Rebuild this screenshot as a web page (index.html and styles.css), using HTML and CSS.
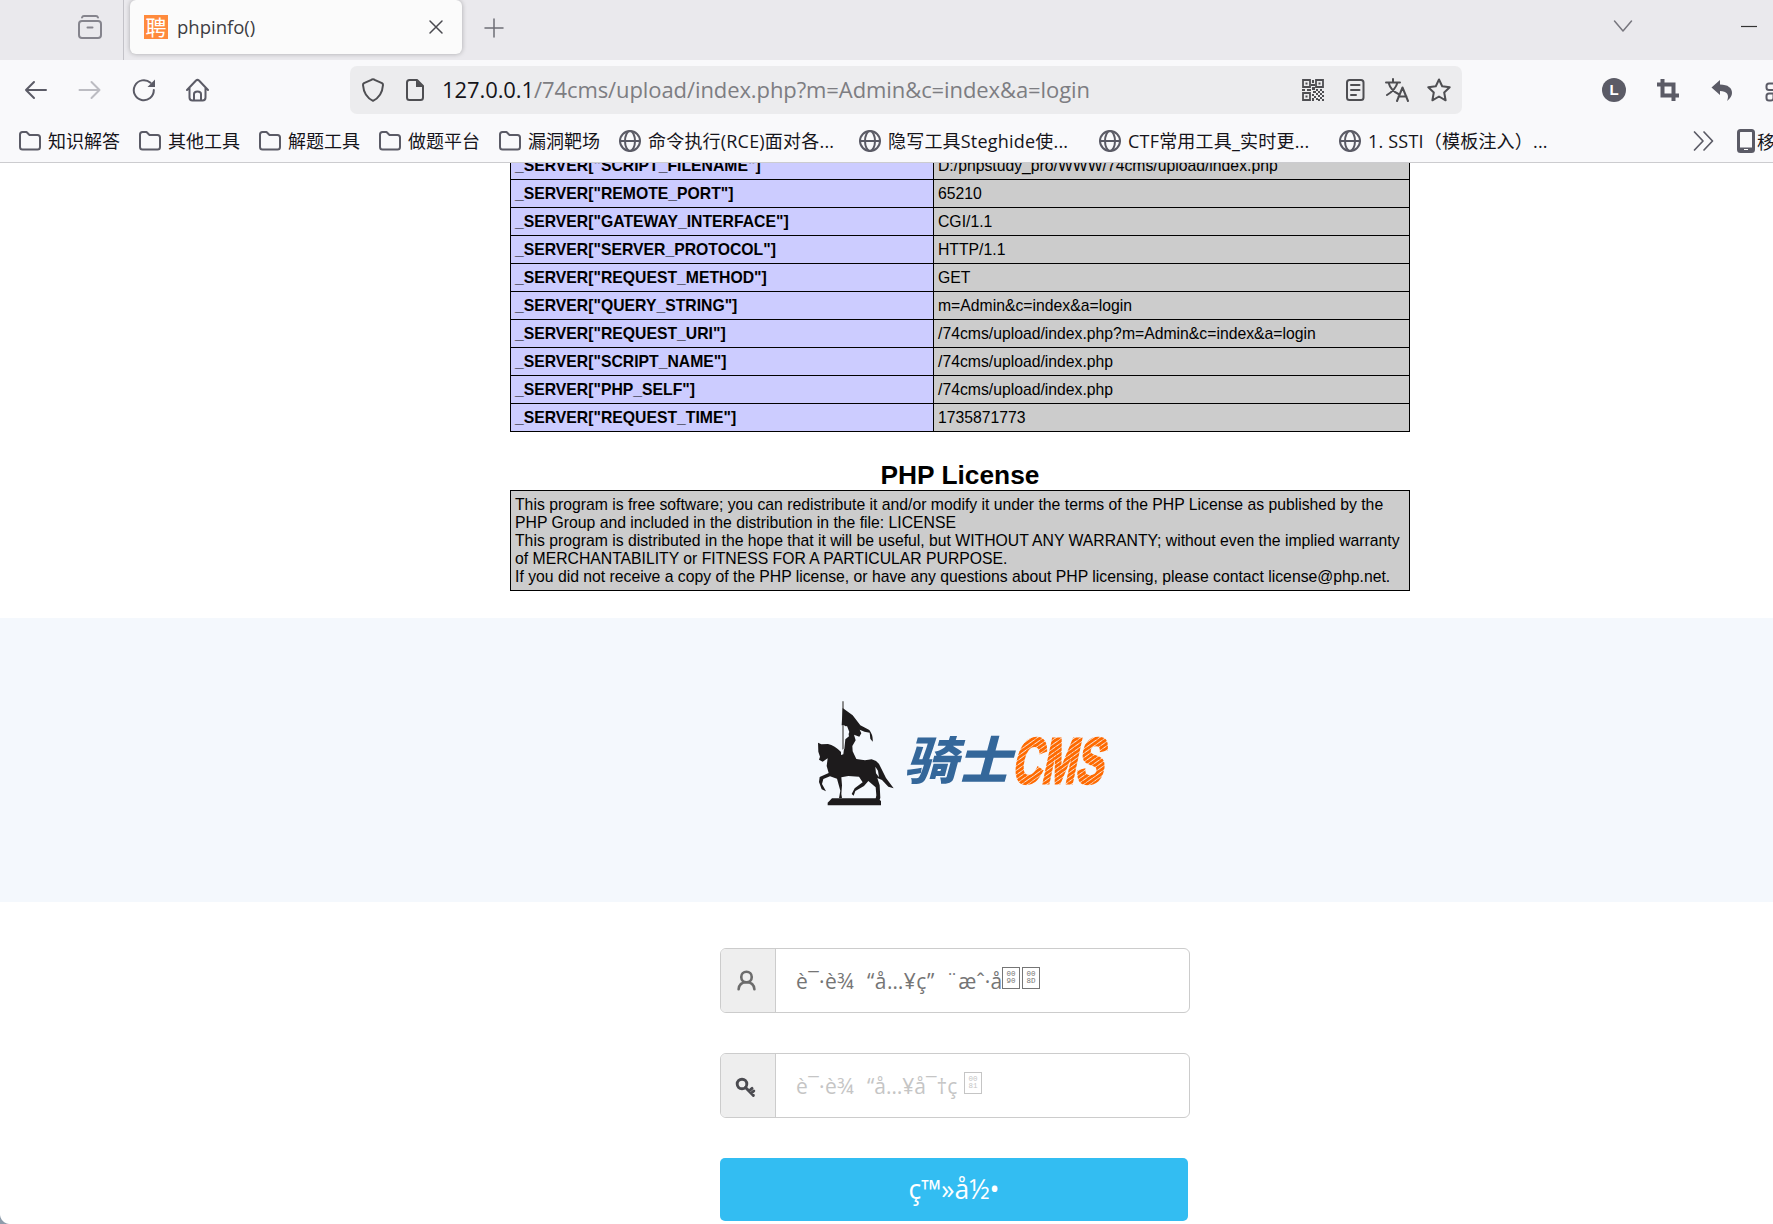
FILE: index.html
```html
<!DOCTYPE html>
<html lang="zh-CN">
<head>
<meta charset="utf-8">
<title>phpinfo()</title>
<link rel="stylesheet" href="styles.css">
</head>
<body>
<svg class="defs" aria-hidden="true">
  <symbol id="folder" viewBox="0 0 24 24"><path d="M2 18V5.500Q2 3 4.500 3H8.500L11.500 6H19.500Q22 6 22 8.500V18Q22 20.500 19.500 20.500H4.500Q2 20.500 2 18Z"/></symbol>
  <symbol id="globe" viewBox="0 0 24 24"><circle cx="12" cy="12" r="10"/><ellipse cx="12" cy="12" rx="5" ry="10"/><path d="M2 12H22"/></symbol>
</svg>
<div class="window">
  <header class="tabs">
    <div class="tabs-left">
      <svg class="icon muted" viewBox="0 0 24 24"><rect x="1" y="6" width="22" height="17" rx="3"/><path d="M4 2.500Q4.500 1 6 1H18Q19.500 1 20 2.500M9.500 12.500H14.500"/></svg>
    </div>
    <div class="tab">
      <span class="favicon">聘</span>
      <span class="tab-title">phpinfo()</span>
      <svg class="icon thin" viewBox="0 0 24 24"><path d="M6 6L18 18M18 6L6 18"/></svg>
    </div>
    <svg class="icon plus" viewBox="0 0 24 24"><path d="M12 3V21M3 12H21"/></svg>
    <svg class="icon chevron" viewBox="0 0 24 24"><path d="M3.500 7L12 17L20.500 7"/></svg>
    <svg class="minimize" viewBox="0 0 16 3"><path d="M0 1.500H16"/></svg>
  </header>
  <nav class="nav">
    <svg class="icon" viewBox="0 0 24 24"><path d="M22 12H2M10 4L2 12L10 20"/></svg>
    <svg class="icon disabled" viewBox="0 0 24 24"><path d="M1.500 12H21.500M13.500 4L21.500 12L13.500 20"/></svg>
    <svg class="icon" viewBox="0 0 24 24"><path d="M21.800 12A10 10 0 1 1 18.500 4.800"/><path class="solid" d="M23 1.500V9H15.500Z"/></svg>
    <svg class="icon" viewBox="0 0 24 24"><path d="M1 12L10 2.500Q11.500 1.200 13 2.500L22 12M3.500 10V19.500Q3.500 22.500 6.500 22.500H16.500Q19.500 22.500 19.500 19.500V10M8 22V16Q8 13.500 11.500 13.500T15 16V22"/></svg>
    <div class="urlbar">
      <svg class="icon dark" viewBox="0 0 24 24"><path d="M12 1.200Q13 1.200 13.600 1.800L21 5.200Q22 5.800 22 7C21.500 13.500 19 19.500 12 22.800C5 19.500 2.500 13.500 2 7Q2 5.800 3 5.200L10.400 1.800Q11 1.200 12 1.200Z"/></svg>
      <svg class="icon dark" viewBox="0 0 24 24"><path d="M4 19.500V4.500Q4 2 6.500 2H14L20 8V19.500Q20 22 17.500 22H6.500Q4 22 4 19.500Z"/><path class="solid" d="M13 2V9H20.500Z"/></svg>
      <span class="url"><b>127.0.0.1</b>/74cms/upload/index.php?m=Admin&amp;c=index&amp;a=login</span>
      <svg class="icon dark qr" viewBox="0 0 24 24"><path d="M2 2H9V9H2ZM15 2H22V9H15ZM2 15H9V22H2Z"/><path class="solid" d="M4.500 4.500h2v2h-2zM17.500 4.500h2v2h-2zM4.500 17.500h2v2h-2zM11 2h2v3h-2zM10 6h4v2h-4zM11 9h3v3h-3zM1 11h3v2H1zM6 11h4v2H6zM15 11h2v2h-2zM19 11h2v2h-2zM12 13h3v2h-3zM17 13h2v2h-2zM21 13h2v2h-2zM11 16h2v2h-2zM15 15h2v2h-2zM19 15h2v2h-2zM13 18h2v2h-2zM17 17h2v2h-2zM21 17h2v2h-2zM11 20h2v3h-2zM15 20h2v2h-2zM19 19h2v2h-2zM17 21h2v2h-2zM21 21h2v2h-2z"/></svg>
      <svg class="icon dark" viewBox="0 0 24 24"><rect x="4" y="2" width="16.500" height="20" rx="2.500"/><path d="M8 7H16.500M8 12H16.500M8 17H13"/></svg>
      <svg class="icon dark" viewBox="0 0 24 24"><path d="M1 4.500H15M8 1V4.500M3.500 4.500C5 10 9 14 13.500 16M12.500 4.500C11 10 7 14 2 17M12 23L17.500 9.500L23 23M13.500 18.500H21.500"/></svg>
      <svg class="icon dark" viewBox="0 0 24 24"><path d="M12 1.500L15.200 8.300L22.700 9.300L17.200 14.500L18.600 22.300L12 18.500L5.400 22.300L6.800 14.500L1.300 9.300L8.800 8.300Z"/></svg>
    </div>
    <span class="avatar">L</span>
    <svg class="icon crop" viewBox="0 0 24 24"><path d="M6.500 1V17.500H23M1 6.500H17.500V23"/></svg>
    <svg class="icon" viewBox="0 0 24 24"><path class="solid" d="M1.500 9.500L10 2V6.500C18 6.500 22 10 22 15Q22 19 17 23Q19 18 17 15.500Q15 13 10 13V17Z"/></svg>
    <svg class="icon cut" viewBox="0 0 24 24"><path d="M9 5.500H5Q2.500 5.500 2.500 8V9.500Q2.500 12 5 12H10L22 20M9 15.500H5Q2.500 15.500 2.500 18V20Q2.500 22.500 5 22.500H7Q9.500 22.500 9.500 20V15.500L22 8"/></svg>
  </nav>
  <div class="bookmarks">
    <span class="mark"><svg class="icon"><use href="#folder"/></svg><span>知识解答</span></span>
    <span class="mark"><svg class="icon"><use href="#folder"/></svg><span>其他工具</span></span>
    <span class="mark"><svg class="icon"><use href="#folder"/></svg><span>解题工具</span></span>
    <span class="mark"><svg class="icon"><use href="#folder"/></svg><span>做题平台</span></span>
    <span class="mark"><svg class="icon"><use href="#folder"/></svg><span>漏洞靶场</span></span>
    <span class="mark wide"><svg class="icon"><use href="#globe"/></svg><span>命令执行(RCE)面对各...</span></span>
    <span class="mark wide"><svg class="icon"><use href="#globe"/></svg><span>隐写工具Steghide使...</span></span>
    <span class="mark wide"><svg class="icon"><use href="#globe"/></svg><span>CTF常用工具_实时更...</span></span>
    <span class="mark wide"><svg class="icon"><use href="#globe"/></svg><span>1. SSTI（模板注入）...</span></span>
    <svg class="icon more" viewBox="0 0 24 24"><path d="M2.500 3L11 12L2.500 21M12 3L20.500 12L12 21"/></svg>
    <span class="mobile"><svg class="phone" viewBox="0 0 18 24"><rect x="1.500" y="1.500" width="15" height="21" rx="2"/><path d="M2 20H16"/><path class="dot" d="M7 20.500H11"/></svg>移</span>
  </div>
  <main class="page">
    <table class="info">
      <tr><th>_SERVER["SCRIPT_FILENAME"]</th><td>D:/phpstudy_pro/WWW/74cms/upload/index.php</td></tr>
      <tr><th>_SERVER["REMOTE_PORT"]</th><td>65210</td></tr>
      <tr><th>_SERVER["GATEWAY_INTERFACE"]</th><td>CGI/1.1</td></tr>
      <tr><th>_SERVER["SERVER_PROTOCOL"]</th><td>HTTP/1.1</td></tr>
      <tr><th>_SERVER["REQUEST_METHOD"]</th><td>GET</td></tr>
      <tr><th>_SERVER["QUERY_STRING"]</th><td>m=Admin&amp;c=index&amp;a=login</td></tr>
      <tr><th>_SERVER["REQUEST_URI"]</th><td>/74cms/upload/index.php?m=Admin&amp;c=index&amp;a=login</td></tr>
      <tr><th>_SERVER["SCRIPT_NAME"]</th><td>/74cms/upload/index.php</td></tr>
      <tr><th>_SERVER["PHP_SELF"]</th><td>/74cms/upload/index.php</td></tr>
      <tr><th>_SERVER["REQUEST_TIME"]</th><td>1735871773</td></tr>
    </table>
    <h2>PHP License</h2>
    <div class="license">This program is free software; you can redistribute it and/or modify it under the terms of the PHP License as published by the<br>PHP Group and included in the distribution in the file: LICENSE<br>This program is distributed in the hope that it will be useful, but WITHOUT ANY WARRANTY; without even the implied warranty<br>of MERCHANTABILITY or FITNESS FOR A PARTICULAR PURPOSE.<br>If you did not receive a copy of the PHP license, or have any questions about PHP licensing, please contact license@php.net.</div>
    <section class="banner">
      <svg class="logo" viewBox="0 0 960 390">
        <defs>
          <pattern id="stripes" width="40" height="12" patternUnits="userSpaceOnUse" patternTransform="rotate(-40)"><rect width="40" height="9.500" fill="#ff6a00"/></pattern>
        </defs>
        <path d="M129 34V190" stroke="#777" stroke-width="5"/>
        <g fill="#1d1b1c">
          <path d="M128 54L158 76L181 106L208 120Q220 136 218 155L211 146L209 128Q193 126 179 119L184 130L178 140L162 134L167 151L157 168L158 184L169 207L195 211L215 208Q237 214 242 232L258 264L281 295L265 290L246 270L232 264L239 286L241 324L235 338L225 337L229 316L227 292L205 273L192 288L166 303L161 317L155 312L164 295L188 277L177 260L145 258L124 262L126 286L124 312L126 324L117 325L121 302L111 266L90 259L70 267L66 282L78 304L65 298L57 276L59 261L86 249L80 228L83 205L68 215L57 209L60 200L55 185L54 158L64 163L84 162Q104 166 124 187L133 177L136 148L147 139L141 112L131 105L125 106Z"/>
          <path d="M96 325H232L243 333V346H83V338Z"/>
        </g>
        <path d="M132 112L141 108L148 126L140 143L133 136ZM123 181L132 176L130 193L123 195ZM226 230L234 242L237 262L228 250Z" fill="#f4f8fd"/>
        <text class="logo-cn" transform="translate(313 266) skewX(-15)" textLength="318" lengthAdjust="spacingAndGlyphs">骑士</text>
        <text class="logo-en" transform="translate(634 280) skewX(-12)" textLength="272" lengthAdjust="spacingAndGlyphs">CMS</text>
      </svg>
    </section>
    <form class="login">
      <div class="field">
        <span class="addon"><svg class="glyph" viewBox="0 0 24 24"><circle cx="12" cy="8" r="6"/><path d="M3 22C3.500 16 8 14 12 14S20.500 16 21 22"/></svg></span>
        <span class="value"><span class="g1">è¯·è¾</span><span class="g2">“å…¥ç”</span><span class="g3">¨æˆ·å</span><span class="hex">00<br>90</span><span class="hex">00<br>8D</span></span>
      </div>
      <div class="field">
        <span class="addon"><svg class="glyph key" viewBox="0 0 24 24"><circle cx="8" cy="8" r="5.500"/><path d="M12 12L21 21M16 16L19.500 13M18.500 18.500L21.500 16"/></svg></span>
        <span class="value pale"><span class="g1">è¯·è¾</span><span class="g4">“å…¥å¯†ç</span><span class="hex">00<br>81</span></span>
      </div>
      <button class="submit" type="button">ç™»å½•</button>
    </form>
  </main>
  <span class="corner"></span>
</div>
</body>
</html>
```
FILE: styles.css
```css
* { box-sizing: border-box; }
body { margin: 0; background: #fff; }
.defs { display: none; }
.window {
  position: relative;
  width: 1773px;
  height: 1224px;
  overflow: hidden;
  display: flex;
  flex-direction: column;
  font-family: "Open Sans", "Noto Sans CJK SC", sans-serif;
  color: #15141a;
}
svg { flex: none; }
.icon {
  width: 24px;
  height: 24px;
  fill: none;
  stroke: #5b5b66;
  stroke-width: 2;
  stroke-linejoin: round;
  stroke-linecap: round;
}
.icon .solid { fill: #5b5b66; stroke: none; }
.dark { stroke: #4e4e52; }
.dark .solid { fill: #4e4e52; }
.muted { stroke: #85848d; }
.thin { stroke: #4a4a50; stroke-width: 1.5; }
.disabled { stroke: #bcbcc2; }

.tabs {
  height: 60px;
  flex: none;
  display: flex;
  background: #eae9ed;
}
.tabs-left {
  width: 124px;
  padding: 15px 0 0 78px;
  border-right: 1px solid #c3c2c8;
}
.tab {
  display: flex;
  align-items: center;
  width: 332px;
  height: 54px;
  margin-left: 6px;
  padding: 0 14px;
  border-radius: 6px;
  background: #fbfbfb;
  box-shadow: 0 0 5px rgba(0, 0, 0, .28);
}
.favicon {
  width: 24px;
  height: 24px;
  background: #ff8a3c;
  color: #fff;
  font: 21px/23px "Noto Sans CJK SC", sans-serif;
  text-align: center;
}
.tab-title {
  flex: 1;
  margin-left: 9px;
  padding-bottom: 2px;
  font-size: 18.500px;
  letter-spacing: 0;
  color: #3d3c42;
}
.plus { margin: 16px 0 0 20px; stroke: #6e6d75; stroke-width: 1.5; }
.chevron { margin: 14px 0 0 1105px; stroke: #77767e; stroke-width: 1.5; }
.minimize { width: 16px; height: 3px; margin: 25px 0 0 106px; stroke: #333; stroke-width: 1.2; }

.nav {
  height: 60px;
  flex: none;
  display: flex;
  align-items: center;
  gap: 30px;
  padding-left: 24px;
  background: #f9f9fb;
}
.urlbar {
  flex: none;
  width: 1112px;
  height: 48px;
  margin: 0 110px;
  padding: 0 11px;
  display: flex;
  align-items: center;
  gap: 18px;
  border-radius: 7px;
  background: #ececee;
}
.url {
  flex: 1;
  margin-left: -3px;
  padding-bottom: 2px;
  font-size: 22px;
  letter-spacing: -.09px;
  color: #7d7d82;
  white-space: nowrap;
}
.url b { font-weight: 400; color: #15141a; }
.qr { stroke-width: 1.8; stroke-linejoin: miter; }
.avatar {
  flex: none;
  width: 24px;
  height: 24px;
  border-radius: 50%;
  background: #5b5b66;
  color: #fff;
  font: bold 15px/24px "Liberation Sans", sans-serif;
  text-align: center;
}
.crop { stroke-width: 4; stroke-linecap: butt; stroke-linejoin: miter; }

.bookmarks {
  height: 43px;
  flex: none;
  display: flex;
  align-items: center;
  padding: 0 0 1px 18px;
  border-bottom: 1px solid #cccccf;
  background: #f9f9fb;
  font-size: 18px;
  white-space: nowrap;
}
.mark {
  flex: none;
  width: 120px;
  display: flex;
  align-items: center;
  gap: 6px;
}
.mark span { padding-bottom: 2px; }
.wide { width: 240px; letter-spacing: .2px; }
.more { margin-left: 114px; stroke-width: 1.7; }
.mobile { display: flex; align-items: center; gap: 2px; margin-left: 21px; }
.phone { width: 18px; height: 24px; fill: none; stroke: #5b5b66; stroke-width: 3; }
.phone .dot { stroke: #fff; stroke-width: 1; }

.page {
  flex: 1;
  overflow: hidden;
  display: flex;
  flex-direction: column;
}
.info {
  flex: none;
  width: 900px;
  margin: -12px 0 0 510px;
  border-collapse: collapse;
  table-layout: fixed;
  color: #000;
  font: 15.750px/18px "Liberation Sans", Arial, sans-serif;
}
.info th, .info td {
  height: 28px;
  padding: 0 4px;
  border: 1px solid #000;
  text-align: left;
  vertical-align: middle;
}
.info th { width: 423px; background: #ccf; }
.info td { background: #ccc; }
h2 {
  width: 900px;
  margin: 28px 0 0 510px;
  font: bold 26.300px/30px "Liberation Sans", Arial, sans-serif;
  color: #000;
  text-align: center;
}
.license {
  flex: none;
  width: 900px;
  height: 101px;
  margin-left: 510px;
  padding: 5px 4px;
  border: 1px solid #000;
  background: #ccc;
  color: #000;
  font: 15.750px/18px "Liberation Sans", Arial, sans-serif;
  white-space: nowrap;
}
.banner {
  flex: none;
  height: 284px;
  margin-top: 27px;
  padding: 72px 0 0 800px;
  background: #f4f8fd;
}
.logo { display: block; width: 320px; height: 130px; }
.logo-cn { font: 900 152px "Noto Sans CJK SC", sans-serif; fill: #34679a; }
.logo-en {
  font: bold 192px "Liberation Sans", sans-serif;
  fill: url(#stripes);
  stroke: url(#stripes);
  stroke-width: 9;
}

.login {
  flex: none;
  width: 470px;
  margin: 46px 0 0 720px;
}
.field {
  display: flex;
  height: 65px;
  margin-bottom: 40px;
  border: 1px solid #ccc;
  border-radius: 6px;
  overflow: hidden;
}
.addon {
  width: 55px;
  padding: 21px 0 0 15px;
  border-right: 1px solid #ccc;
  background: #eee;
}
.glyph { display: block; width: 21px; height: 21px; fill: none; stroke: #6c6c6c; stroke-width: 3; stroke-linecap: round; }
.key { margin-top: 2px; margin-left: -1px; stroke: #4b4b50; stroke-width: 3.300; }
.value {
  display: flex;
  padding: 17px 0 0 20px;
  font: 21px/30px "Open Sans", "Noto Sans", sans-serif;
  color: #757575;
  white-space: nowrap;
}
.pale { color: #c5c5c5; }
.g1 { width: 71px; letter-spacing: .4px; }
.g2 { width: 79px; letter-spacing: .5px; }
.g3 { width: 56px; }
.g4 { width: 97px; }
.hex {
  width: 18px;
  height: 22px;
  margin: 1px 2px 0 0;
  padding-top: 3px;
  border: 1px solid currentColor;
  font: 7.500px/7px "Liberation Mono", monospace;
  text-align: center;
}
.submit {
  display: block;
  width: 468px;
  height: 63px;
  padding: 0 0 2px;
  border: 0;
  border-radius: 5px;
  background: #33bdf2;
  color: #fff;
  font: 26.500px "Open Sans", "Noto Sans", sans-serif;
}
.corner {
  position: absolute;
  left: 0;
  bottom: 0;
  width: 10px;
  height: 10px;
  background: radial-gradient(circle at 100% 0, transparent 9.500px, #8e9cab 10.500px);
}
```
